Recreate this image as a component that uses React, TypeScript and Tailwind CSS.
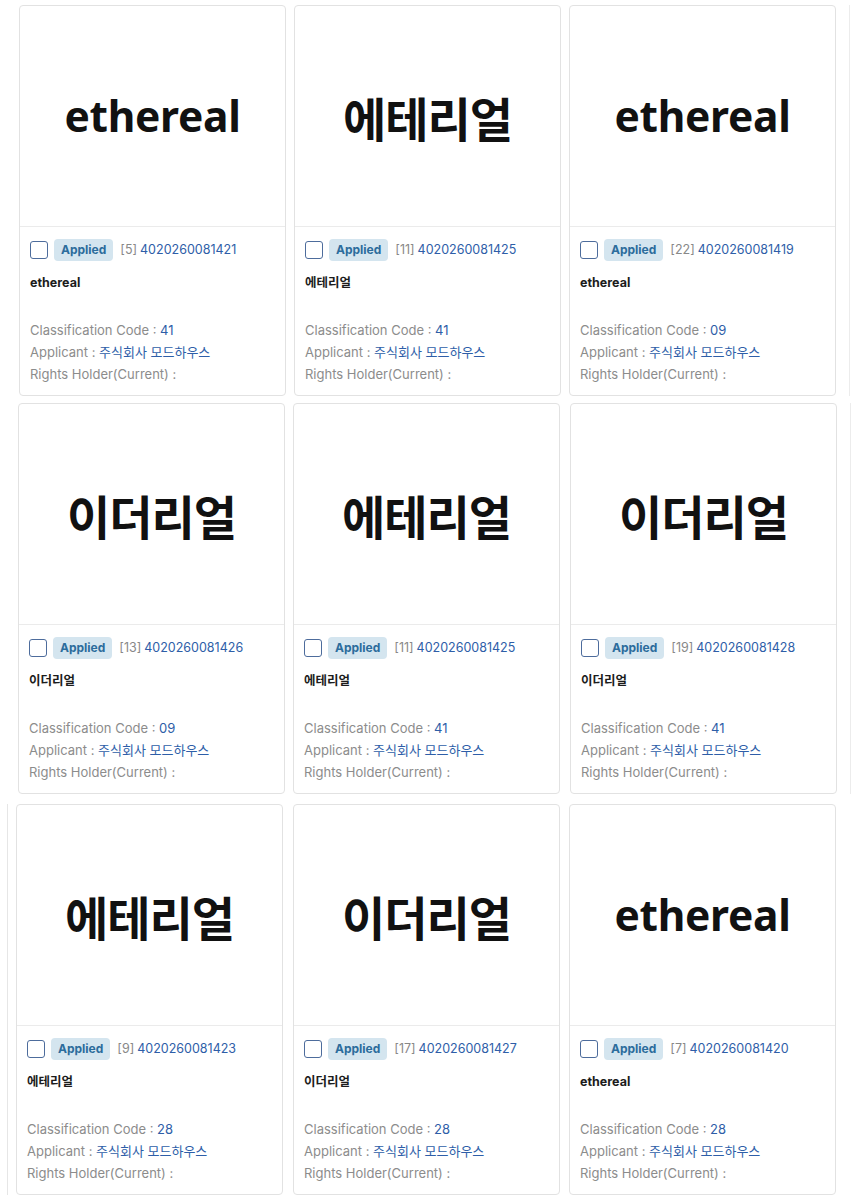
import React from "react";

type Mark = {
  name: string;
  seq: string;
  appNo: string;
  code: string;
};

const rows: { marks: Mark[]; offsets: string[]; className: string; edgeLeft?: boolean; edgeRight?: boolean }[] = [
  {
    className: "pt-[5px] pl-[19px]",
    offsets: ["", "ml-[8px]", "ml-[8px]"],
    edgeRight: true,
    marks: [
      { name: "ethereal", seq: "5", appNo: "4020260081421", code: "41" },
      { name: "에테리얼", seq: "11", appNo: "4020260081425", code: "41" },
      { name: "ethereal", seq: "22", appNo: "4020260081419", code: "09" },
    ],
  },
  {
    className: "mt-[7px] pl-[18px]",
    offsets: ["", "ml-[8px]", "ml-[10px]"],
    edgeRight: true,
    marks: [
      { name: "이더리얼", seq: "13", appNo: "4020260081426", code: "09" },
      { name: "에테리얼", seq: "11", appNo: "4020260081425", code: "41" },
      { name: "이더리얼", seq: "19", appNo: "4020260081428", code: "41" },
    ],
  },
  {
    className: "mt-[10px]",
    offsets: ["ml-[8px]", "ml-[10px]", "ml-[9px]"],
    edgeLeft: true,
    marks: [
      { name: "에테리얼", seq: "9", appNo: "4020260081423", code: "28" },
      { name: "이더리얼", seq: "17", appNo: "4020260081427", code: "28" },
      { name: "ethereal", seq: "7", appNo: "4020260081420", code: "28" },
    ],
  },
];

const isLatin = (s: string) => /^[a-z]+$/i.test(s);

function MarkCard({ mark, className }: { mark: Mark; className: string }) {
  return (
    <div
      className={`flex h-[391px] w-[267px] shrink-0 flex-col rounded-[4px] border border-[#e2e2e2] bg-white ${className}`}
    >
      <div className="flex h-[221px] items-center justify-center border-b border-[#ebebeb]">
        {isLatin(mark.name) ? (
          <span className="font-['Noto_Sans',sans-serif] text-[42.5px] font-bold leading-none tracking-[-0.3px] text-[#111]">
            {mark.name}
          </span>
        ) : (
          <span className="font-['Noto_Sans_CJK_KR',sans-serif] text-[47px] font-bold leading-none tracking-[-1px] text-[#111]">
            {mark.name}
          </span>
        )}
      </div>
      <div className="flex flex-1 flex-col px-[10px] pt-[12px] font-['Inter','Noto_Sans_CJK_KR',sans-serif]">
        <div className="flex h-[22px] items-center">
          <span className="h-[18px] w-[18px] rounded-[3px] border-[1.5px] border-[#4d6c9c] bg-white" />
          <span className="ml-[6px] flex h-[22px] items-center rounded-[4px] bg-[#d4e5ef] px-[7px] text-[12px] font-bold text-[#2c6c9c]">
            Applied
          </span>
          <span className="ml-[7px] text-[12.5px] text-[#888]">[{mark.seq}]</span>
          <span className="ml-[3px] text-[12.5px] text-[#2e5ea8]">{mark.appNo}</span>
        </div>
        <div className="mt-[14px] h-[16px] text-[12.5px] font-bold leading-[16px] text-[#1c1c1c]">
          {mark.name}
        </div>
        <div className="mt-[28px] text-[13px] leading-[22px] text-[#8c8c8c]">
          <div>
            Classification Code : <span className="text-[#2e5ea8]">{mark.code}</span>
          </div>
          <div>
            Applicant : <span className="text-[#2e5ea8]">주식회사 모드하우스</span>
          </div>
          <div>Rights Holder(Current) :</div>
        </div>
      </div>
    </div>
  );
}

export default function App() {
  return (
    <div className="h-[1200px] w-[855px] overflow-hidden bg-white">
      {rows.map((row, i) => (
        <div key={i} className={`flex ${row.className}`}>
          {row.edgeLeft && <div className="h-[391px] w-[8px] shrink-0 border-r border-[#e6e6e6]" />}
          {row.marks.map((m, j) => (
            <MarkCard key={j} mark={m} className={row.offsets[j]} />
          ))}
          {row.edgeRight && <div className="ml-[13px] h-[391px] w-[4px] shrink-0 border-l border-[#ececec]" />}
        </div>
      ))}
    </div>
  );
}
